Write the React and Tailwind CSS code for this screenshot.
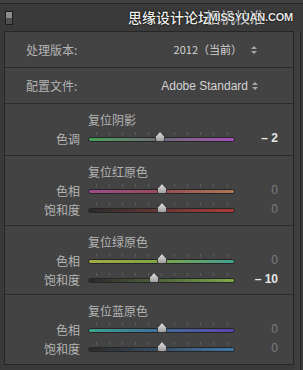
const font = { fontFamily: '"Noto Sans CJK SC", "Noto Sans", sans-serif' }

const TICKS = [-5, -4, -3, -2, -1, 0, 1, 2, 3, 4, 5]

function Thumb({ value }) {
  const left = ((value + 100) / 200) * 147
  return (
    <svg
      className="absolute top-[2px]"
      style={{ left: left - 5 }}
      width="10"
      height="11"
      viewBox="0 0 10 11"
    >
      <defs>
        <linearGradient id="thumbg" x1="0" y1="0" x2="0" y2="1">
          <stop offset="0" stopColor="#e2e2e2" />
          <stop offset="1" stopColor="#9c9c9c" />
        </linearGradient>
      </defs>
      <path d="M5 0.5 L9.5 5.5 L9.5 9 Q9.5 10.5 8 10.5 L2 10.5 Q0.5 10.5 0.5 9 L0.5 5.5 Z" fill="url(#thumbg)" stroke="#2a2a2a" strokeWidth="0.8" />
    </svg>
  )
}

function SliderRow({ label, track, value }) {
  const active = value !== 0
  return (
    <div className="flex h-[19px] items-center">
      <span className="w-[75px] text-right text-[12px] leading-[19px] text-[#b4b4b4]" style={font}>
        {label}
      </span>
      <div className="relative ml-[8px] h-[19px] w-[147px]">
        {TICKS.map((k) => (
          <div
            key={k}
            className="absolute top-[3px] h-[3px] w-px bg-[#5c5c5c]"
            style={{ left: 73 + k * 13.1 }}
          />
        ))}
        <div className={`absolute left-0 right-0 top-[8px] h-[5px] rounded-full border border-[#262626] ${track}`} />
        <Thumb value={value} />
      </div>
      <span
        className={`w-[43px] text-right text-[12px] leading-[19px] ${active ? 'text-[#e6e6e6] font-semibold' : 'text-[#7c7c7c]'}`}
        style={{ fontFamily: '"Liberation Sans", Arial, sans-serif' }}
      >
        {active ? `– ${Math.abs(value)}` : '0'}
      </span>
    </div>
  )
}

function Section({ title, children, pb, last }) {
  return (
    <div className={`pt-[7px] ${pb} ${last ? '' : 'border-b border-[#2c2c2c]'}`}>
      <div className="h-[18px] pl-[83px] text-[12px] leading-[18px] text-[#b4b4b4]" style={font}>
        {title}
      </div>
      {children}
    </div>
  )
}

function Stepper({ ml }) {
  return (
    <div className={`${ml} flex flex-col gap-[2px]`}>
      <div className="h-0 w-0 border-x-[3px] border-b-[3px] border-x-transparent border-b-[#a8a8a8]" />
      <div className="h-0 w-0 border-x-[3px] border-t-[3px] border-x-transparent border-t-[#a8a8a8]" />
    </div>
  )
}

export default function App() {
  return (
    <div className="relative h-[370px] w-[303px] overflow-hidden bg-[#3a3a3a]">
      {/* top strip */}
      <div className="h-[4px] border-b border-[#262626] bg-[#424242]" />

      {/* header */}
      <div className="relative flex h-[27px] items-center pl-[5px]">
        <div className="flex h-[14px] w-[8px] flex-col overflow-hidden border border-[#1e1e1e]">
          <div className="h-1/2 bg-[#8e8e8e]" />
          <div className="h-1/2 bg-[#4e4e4e]" />
        </div>
        <span
          className="absolute left-[205px] top-[3px] text-[15px] leading-[20px] text-[#cfcfcf]"
          style={font}
        >
          相机校准
        </span>
        <span
          className="absolute left-[128px] top-[4px] text-[14px] leading-[18px] font-medium text-[#f0f0f0] [text-shadow:0_0_1px_#000,0_0_2px_#000]"
          style={font}
        >
          思缘设计论坛
        </span>
        <span
          className="absolute right-[10px] top-[7px] text-[11px] leading-[13px] font-bold tracking-[-0.2px] text-[#e8e8e8] [text-shadow:0_0_1px_#000,0_0_2px_#000]"
          style={{ fontFamily: '"Liberation Sans", Arial, sans-serif' }}
        >
          MISSYUAN.COM
        </span>
      </div>

      <div className="flex">
        {/* panel */}
        <div className="ml-[4px] h-[334px] w-[290px] border border-[#262626] bg-[#434343]">
          <div className="flex h-[36px] items-center border-b border-[#2c2c2c] pl-[21px] pr-[36px]">
            <span className="text-[12px] text-[#b4b4b4]" style={font}>处理版本:</span>
            <span className="ml-auto text-[11px] text-[#d4d4d4]" style={font}>2012（当前）</span>
            <Stepper ml="ml-[9px]" />
          </div>
          <div className="flex h-[36px] items-center border-b border-[#2c2c2c] pl-[21px] pr-[35px]">
            <span className="text-[12px] text-[#b4b4b4]" style={font}>配置文件:</span>
            <span
              className="ml-auto text-[12px] text-[#d4d4d4]"
              style={{ fontFamily: '"Liberation Sans", Arial, sans-serif' }}
            >
              Adobe Standard
            </span>
            <Stepper ml="ml-[4px]" />
          </div>

          <Section title="复位阴影" pb="pb-[7px]">
            <SliderRow label="色调" value={-2} track="bg-linear-to-r from-[#3ea257] via-[#6f6878] to-[#a64cb8]" />
          </Section>

          <Section title="复位红原色" pb="pb-[6px]">
            <SliderRow label="色相" value={0} track="bg-linear-to-r from-[#9c4c8c] via-[#9a4a55] to-[#a87a55]" />
            <SliderRow label="饱和度" value={0} track="bg-linear-to-r from-[#2a2a2a] to-[#ad3a3a]" />
          </Section>

          <Section title="复位绿原色" pb="pb-[5px]">
            <SliderRow label="色相" value={0} track="bg-linear-to-r from-[#a4aa48] via-[#7aa444] to-[#3fa08e]" />
            <SliderRow label="饱和度" value={-10} track="bg-linear-to-r from-[#2a2a2a] to-[#7caa46]" />
          </Section>

          <Section title="复位蓝原色" pb="pb-[5px]" last>
            <SliderRow label="色相" value={0} track="bg-linear-to-r from-[#3ca28c] via-[#3c6c9c] to-[#5c42ac]" />
            <SliderRow label="饱和度" value={0} track="bg-linear-to-r from-[#2a2a2a] to-[#4078aa]" />
          </Section>
        </div>

        {/* right edge */}
        <div className="h-[340px] w-[6px] bg-[#3e3e3e]" />
        <div className="h-[340px] w-px bg-[#262626]" />
      </div>
    </div>
  )
}
